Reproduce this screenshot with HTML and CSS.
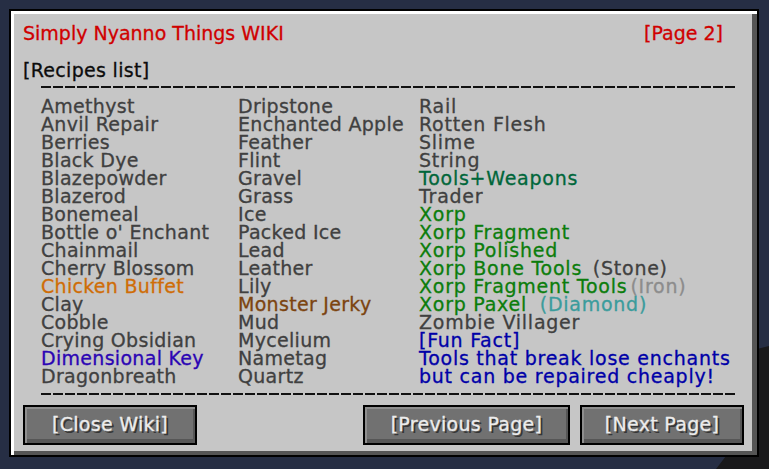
FILE: index.html
```html
<!DOCTYPE html>
<html lang="en">
<head>
<meta charset="utf-8">
<title>Simply Nyanno Things WIKI</title>
<link rel="stylesheet" href="styles.css">
</head>
<body>
<svg class="scenery" width="769" height="469" viewBox="0 0 769 469" aria-hidden="true">
  <polygon points="716,469 726,456 745,456 745,352 769,346 769,469" fill="#19191b"/>
</svg>
<div class="panel">
  <div class="title-row">
    <span class="title">Simply Nyanno Things WIKI</span>
    <span class="page">[Page 2]</span>
  </div>
  <div class="section">[Recipes list]</div>
  <div class="dashes"></div>
  <div class="list">
    <ul class="col">
      <li>Amethyst</li>
      <li>Anvil Repair</li>
      <li>Berries</li>
      <li>Black Dye</li>
      <li>Blazepowder</li>
      <li>Blazerod</li>
      <li>Bonemeal</li>
      <li>Bottle o' Enchant</li>
      <li>Chainmail</li>
      <li>Cherry Blossom</li>
      <li class="orange">Chicken Buffet</li>
      <li>Clay</li>
      <li>Cobble</li>
      <li>Crying Obsidian</li>
      <li class="purple">Dimensional Key</li>
      <li>Dragonbreath</li>
    </ul>
    <ul class="col">
      <li>Dripstone</li>
      <li>Enchanted Apple</li>
      <li>Feather</li>
      <li>Flint</li>
      <li>Gravel</li>
      <li>Grass</li>
      <li>Ice</li>
      <li>Packed Ice</li>
      <li>Lead</li>
      <li>Leather</li>
      <li>Lily</li>
      <li class="brown">Monster Jerky</li>
      <li>Mud</li>
      <li>Mycelium</li>
      <li>Nametag</li>
      <li>Quartz</li>
    </ul>
    <ul class="col col-wide">
      <li>Rail</li>
      <li>Rotten Flesh</li>
      <li>Slime</li>
      <li>String</li>
      <li class="teal-green">Tools+Weapons</li>
      <li>Trader</li>
      <li class="green">Xorp</li>
      <li class="green">Xorp Fragment</li>
      <li class="green">Xorp Polished</li>
      <li class="green">Xorp Bone Tools <span class="tier tier-stone">(Stone)</span></li>
      <li class="green">Xorp Fragment Tools<span class="tier tier-iron">(Iron)</span></li>
      <li class="green">Xorp Paxel <span class="tier tier-diamond">(Diamond)</span></li>
      <li>Zombie Villager</li>
      <li class="blue">[Fun Fact]</li>
      <li class="blue">Tools that break lose enchants</li>
      <li class="blue">but can be repaired cheaply!</li>
    </ul>
  </div>
  <div class="dashes dashes-bottom"></div>
  <div class="buttons">
    <button class="btn btn-close">[Close Wiki]</button>
    <button class="btn btn-prev">[Previous Page]</button>
    <button class="btn btn-next">[Next Page]</button>
  </div>
</div>
</body>
</html>
```
FILE: styles.css
```css
html, body {
  margin: 0;
  padding: 0;
}

body {
  width: 769px;
  height: 469px;
  overflow: hidden;
  position: relative;
  background: #262e44;
  font-family: "DejaVu Sans", "Liberation Sans", sans-serif;
  font-size: 19px;
  line-height: 18px;
  letter-spacing: 0.3px;
  -webkit-text-stroke: 0.3px currentColor;
}

.scenery {
  position: absolute;
  left: 0;
  top: 0;
  z-index: 0;
}

.panel {
  position: relative;
  z-index: 1;
  box-sizing: border-box;
  width: 750px;
  height: 448px;
  margin: 9px 0 0 9px;
  padding: 13px 34px 0 12px;
  background: #c6c6c6;
  border: 2px solid #000;
  box-shadow: inset 3px 3px 0 #ffffff, inset -5px -4px 0 #555555;
}

.title-row {
  display: flex;
  justify-content: space-between;
  height: 18px;
  color: #d00000;
  letter-spacing: 0;
}

.section {
  margin-top: 19px;
  height: 18px;
  color: #0c0c0c;
}

.dashes {
  margin: 7px -12px 0 18px;
  height: 2px;
  background: repeating-linear-gradient(90deg, #111 0 10px, transparent 10px 12px);
}

.dashes-bottom {
  margin-top: 8px;
}

.list {
  display: grid;
  grid-template-columns: 197px 181px auto;
  margin: 9px 0 0 18px;
  color: #404040;
}

.col {
  list-style: none;
  margin: 0;
  padding: 0;
}

.col-wide {
  letter-spacing: 0.75px;
}

.col li {
  height: 18px;
  white-space: nowrap;
}

.orange { color: #cf6d06; }
.purple { color: #2b05b4; }
.brown { color: #7c4410; }
.green { color: #0b7d0b; }
.teal-green { color: #00663a; }
.blue { color: #0000a8; }

.tier { margin-left: 4px; }
.tier-stone { color: #404040; }
.tier-iron { color: #8c8c8c; margin-left: 3px; }
.tier-diamond { color: #3b9c9c; margin-left: 6px; }

.buttons {
  display: flex;
  margin: 10px -21px 0 0;
  gap: 10px;
}

.btn {
  box-sizing: border-box;
  height: 40px;
  padding: 0 0 2px;
  border: 2px solid #000;
  background: #717171;
  box-shadow: inset 2px 2px 0 #8e8e8e, inset -2px -4px 0 #565656;
  color: #ececec;
  text-shadow: 2px 2px 0 #363636;
  -webkit-text-stroke: 0.3px #ececec;
  font: inherit;
  letter-spacing: 0.3px;
  cursor: pointer;
}

.btn-close { width: 174px; }
.btn-prev { width: 207px; margin-left: auto; }
.btn-next { width: 164px; }
```
